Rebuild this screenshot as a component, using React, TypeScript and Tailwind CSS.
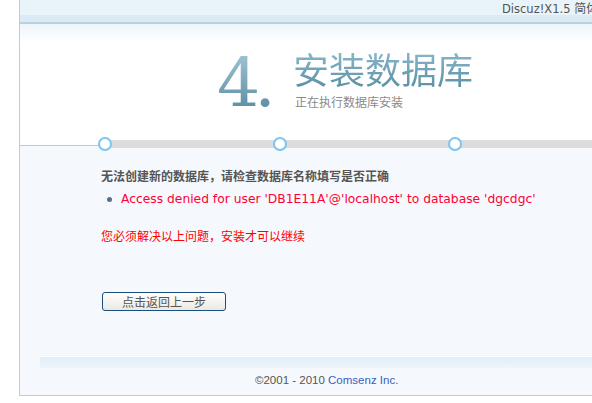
import React from "react";

const cjk = '"Noto Sans CJK SC", sans-serif';
const latin = '"DejaVu Sans", "Noto Sans CJK SC", sans-serif';

export default function App() {
  return (
    <div className="w-[592px] h-[403px] bg-white overflow-hidden flex" style={{ fontFamily: latin }}>
      <div className="w-[19px] shrink-0" />
      <div className="w-[720px] shrink-0 flex flex-col border-l border-[#b6cfd9] h-[396px] border-b">
        {/* header band */}
        <div className="h-[22px] bg-gradient-to-b from-[#e9f3fa] from-70% to-[#dbeaf5] to-70% pl-[482px] whitespace-nowrap text-[12px] leading-[16px] text-[#555]" style={{ fontFamily: latin }}>
          <span className="text-[11.5px]">Discuz!X1.5 </span>
          <span style={{ fontFamily: cjk }}>简体中文 UTF8 版</span>
        </div>
        <div className="h-[2px] bg-[#b3d3df]" />
        {/* title area */}
        <div className="h-[121px] bg-gradient-to-b from-[#eef5fa] to-white to-[15%] flex items-start pl-[197px] pt-[17px]">
          <div className="w-[58px] flex items-end mt-[3px]">
            <span
              className="text-[68px] leading-[78px] font-normal bg-gradient-to-b from-[#a9cddc] to-[#4f8399] bg-clip-text text-transparent tracking-[-6px]"
              style={{ fontFamily: '"DejaVu Serif", "Liberation Serif", serif' }}
            >
              4.
            </span>
          </div>
          <div className="flex flex-col ml-[18px] mt-[7px]">
            <div
              className="text-[36px] leading-[40px] bg-gradient-to-b from-[#8dbacd] to-[#5b91a7] bg-clip-text text-transparent"
              style={{ fontFamily: cjk }}
            >
              安装数据库
            </div>
            <div className="text-[12px] leading-[16px] text-[#8a8a8a] ml-[2px] mt-[6px]" style={{ fontFamily: cjk }}>
              正在执行数据库安装
            </div>
          </div>
        </div>
        {/* content */}
        <div className="relative flex-1 border-t border-[#a9cfe0] bg-[#f5f9fd] flex flex-col">
          <div className="absolute top-[-6px] left-[85px] right-0 h-[8px] bg-[#dcdcdc]">
            <div className="absolute left-[-7px] top-[-3px] w-[14px] h-[14px] rounded-full border-2 border-[#7dc5ee] bg-white" />
            <div className="absolute left-[168px] top-[-3px] w-[14px] h-[14px] rounded-full border-2 border-[#7dc5ee] bg-white" />
            <div className="absolute left-[343px] top-[-3px] w-[14px] h-[14px] rounded-full border-2 border-[#7dc5ee] bg-white" />
          </div>
          <div className="pl-[81px] pt-[22px]">
            <div className="text-[12px] leading-[16px] font-bold text-[#555]" style={{ fontFamily: cjk }}>
              无法创建新的数据库，请检查数据库名称填写是否正确
            </div>
            <div className="flex items-center mt-[7px] h-[16px]">
              <span className="w-[5px] h-[5px] rounded-full bg-[#5b6f88] ml-[6px] mr-[9px]" />
              <span className="text-[12.3px] leading-[16px] text-[#ff0033] whitespace-nowrap" style={{ fontFamily: latin }}>
                Access denied for user 'DB1E11A'@'localhost' to database 'dgcdgc'
              </span>
            </div>
            <div className="text-[12px] leading-[16px] text-[#ff0000] mt-[21px]" style={{ fontFamily: cjk }}>
              您必须解决以上问题，安装才可以继续
            </div>
            <button
              className="mt-[48px] ml-[1px] w-[124px] h-[19px] border border-[#1d4f7c] rounded-[3px] bg-gradient-to-b from-white to-[#ebe9e1] text-[12px] leading-[16px] text-[#555] flex items-center justify-center"
              style={{ fontFamily: cjk }}
            >
              点击返回上一步
            </button>
          </div>
          <div className="flex-1" />
          <div className="ml-[20px] h-[1px] bg-white" />
          <div className="ml-[20px] h-[11px] bg-gradient-to-b from-[#e1edf8] to-[#eef5fb]" />
          <div className="pl-[235px] pt-[5px] h-[27px] text-[11.5px] leading-[14px] text-[#555] whitespace-nowrap" style={{ fontFamily: '"Liberation Sans", sans-serif' }}>
            ©2001 - 2010 <span className="text-[#3a5fbf]">Comsenz Inc.</span>
          </div>
        </div>
      </div>
    </div>
  );
}
